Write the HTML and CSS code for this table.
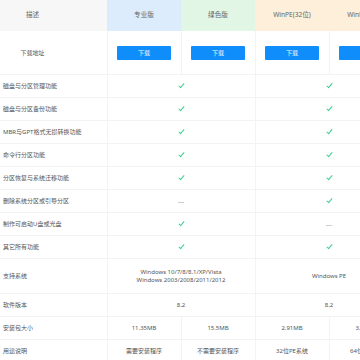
FILE: index.html
```html
<!DOCTYPE html>
<html lang="zh-CN">
<head>
<meta charset="utf-8">
<link rel="stylesheet" href="styles.css">
</head>
<body>
<div class="wrap">
<table class="cmp">
  <colgroup>
    <col class="c-desc"><col class="c-ver"><col class="c-ver"><col class="c-ver"><col class="c-ver">
  </colgroup>
  <thead>
    <tr class="head">
      <th class="h-desc"><span class="shift">描述</span></th>
      <th class="h-pro">专业版</th>
      <th class="h-green">绿色版</th>
      <th class="h-pe">WinPE(32位)</th>
      <th class="h-pe">WinPE(64位)</th>
    </tr>
  </thead>
  <tbody>
    <tr class="dl">
      <td class="lbl-c"><span class="shift">下载地址</span></td>
      <td><span class="btn">下载</span></td>
      <td><span class="btn">下载</span></td>
      <td><span class="btn">下载</span></td>
      <td><span class="btn">下载</span></td>
    </tr>
    <tr><td class="lbl">磁盘与分区管理功能</td><td colspan="2"><i class="ok"></i></td><td colspan="2"><i class="ok"></i></td></tr>
    <tr><td class="lbl">磁盘与分区备份功能</td><td colspan="2"><i class="ok"></i></td><td colspan="2"><i class="ok"></i></td></tr>
    <tr><td class="lbl">MBR与GPT格式无损转换功能</td><td colspan="2"><i class="ok"></i></td><td colspan="2"><i class="ok"></i></td></tr>
    <tr><td class="lbl">命令行分区功能</td><td colspan="2"><i class="ok"></i></td><td colspan="2"><i class="ok"></i></td></tr>
    <tr><td class="lbl">分区恢复与系统迁移功能</td><td colspan="2"><i class="ok"></i></td><td colspan="2"><i class="ok"></i></td></tr>
    <tr><td class="lbl">删除系统分区或引导分区</td><td colspan="2"><i class="no"></i></td><td colspan="2"><i class="ok"></i></td></tr>
    <tr><td class="lbl">制作可启动U盘或光盘</td><td colspan="2"><i class="ok"></i></td><td colspan="2"><i class="no"></i></td></tr>
    <tr><td class="lbl">其它所有功能</td><td colspan="2"><i class="ok"></i></td><td colspan="2"><i class="ok"></i></td></tr>
    <tr class="tall"><td class="lbl">支持系统</td><td colspan="2">Windows 10/7/8/8.1/XP/Vista<br>Windows 2003/2008/2011/2012</td><td colspan="2">Windows PE</td></tr>
    <tr><td class="lbl">软件版本</td><td colspan="2">8.2</td><td colspan="2">8.2</td></tr>
    <tr><td class="lbl">安装包大小</td><td>11.35MB</td><td>15.5MB</td><td>2.91MB</td><td>3.18MB</td></tr>
    <tr><td class="lbl">用途说明</td><td>需要安装程序</td><td>不需要安装程序</td><td>32位PE系统</td><td>64位PE系统</td></tr>
  </tbody>
</table>
</div>
</body>
</html>
```

FILE: styles.css
```css
html, body {
  margin: 0;
  padding: 0;
  background: #ffffff;
}
.wrap {
  width: 360px;
  height: 360px;
  overflow: hidden;
}
.cmp {
  width: 403px;
  table-layout: fixed;
  border-collapse: collapse;
  font-family: "Noto Sans", "Noto Sans CJK SC", sans-serif;
  font-size: 6px;
  color: #555555;
}
.c-desc { width: 107px; }
.c-ver { width: 74px; }
.cmp th, .cmp td {
  padding: 0;
  text-align: center;
  vertical-align: middle;
  border: 1px solid #f1f3f4;
  line-height: 8px;
}
.cmp th {
  height: 30px;
  font-weight: normal;
  font-size: 6.6px;
  color: #666666;
  border-top: none;
  border-color: transparent;
}
.h-desc { background: #f7f7f7; }
.h-pro { background: #ddecfc; }
.h-green { background: #e1f6e5; }
.h-pe { background: #fdefda; }
.cmp tr > :first-child { border-left: none; }
.shift {
  display: inline-block;
  width: 65px;
  text-align: center;
  margin-right: 42px;
}
.cmp td { height: 22px; }
.dl td { height: 43px; }
.tall td { height: 34px; }
.lbl {
  text-align: left !important;
  padding-left: 3px !important;
}
.btn {
  display: inline-block;
  width: 54px;
  height: 14px;
  line-height: 14px;
  background: #0f8dfb;
  color: #ffffff;
  border-radius: 1px;
  font-size: 6px;
}
.ok {
  display: inline-block;
  width: 2px;
  height: 5px;
  border-right: 1.6px solid #3bd08f;
  border-bottom: 1.6px solid #3bd08f;
  transform: rotate(40deg);
  margin-top: -2px;
  vertical-align: middle;
}
.no {
  display: inline-block;
  width: 6px;
  height: 1px;
  background: #cfcfcf;
  vertical-align: middle;
  margin-top: 3px;
}
```
